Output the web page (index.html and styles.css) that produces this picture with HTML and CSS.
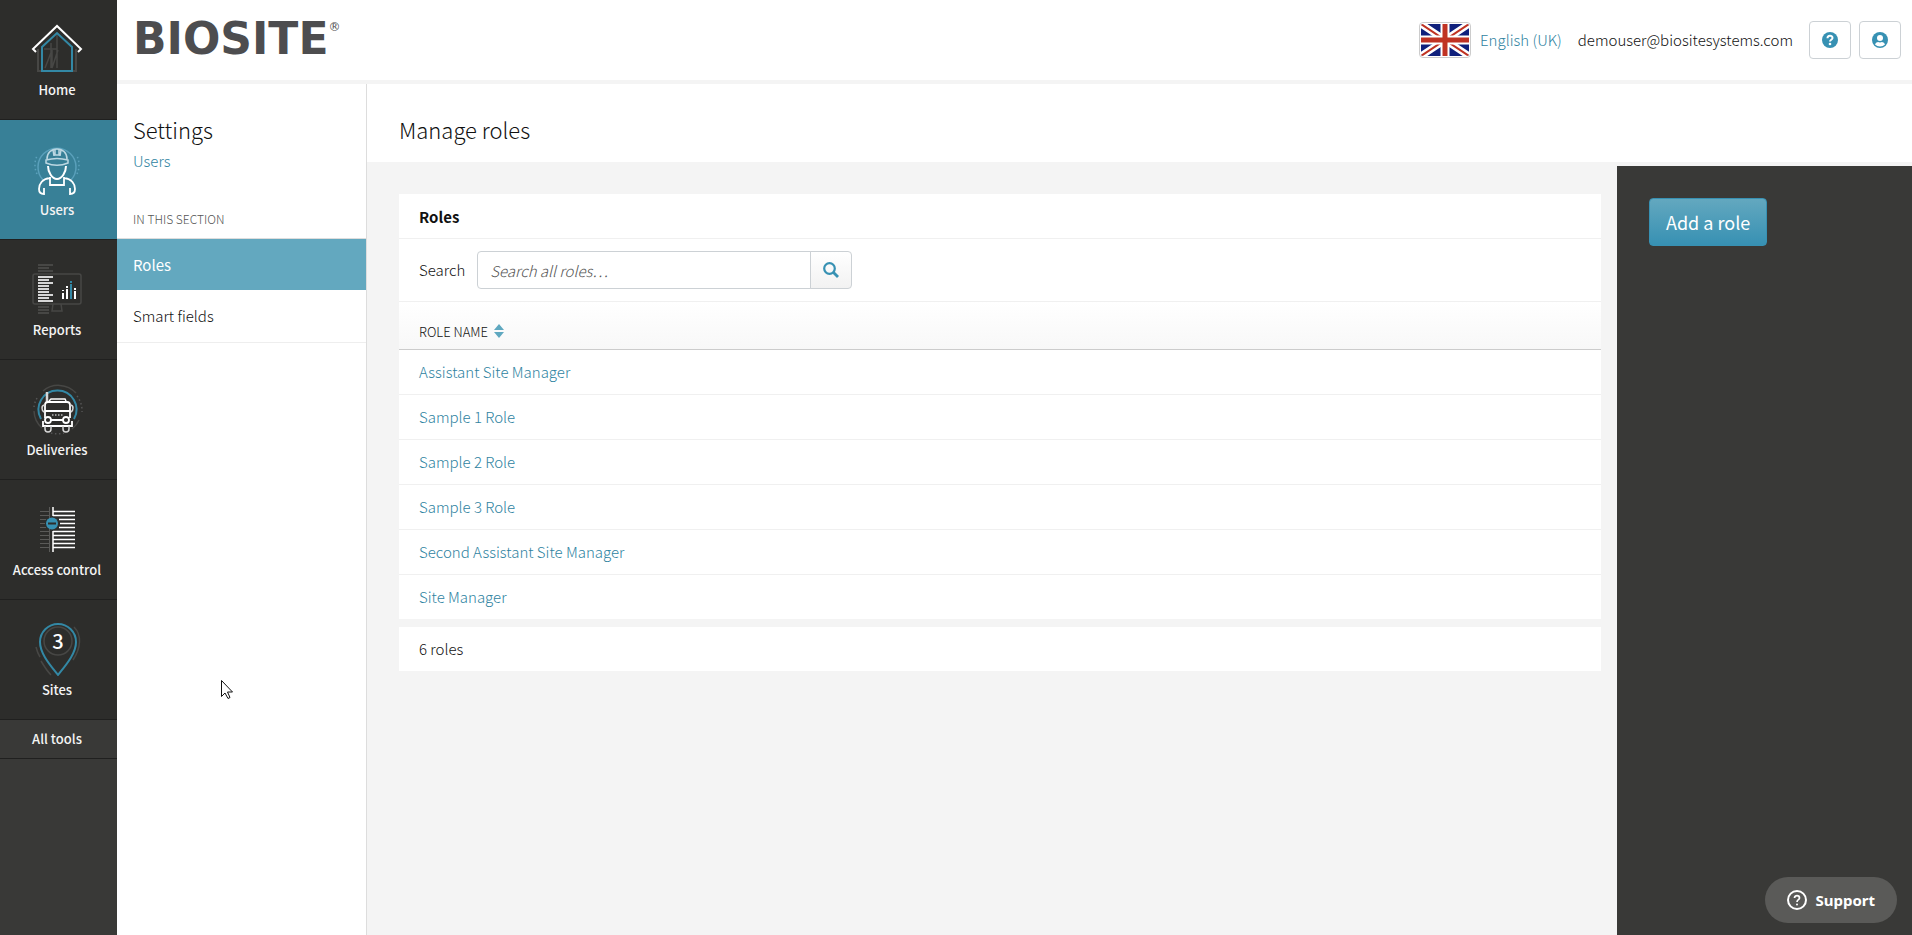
FILE: index.html
```
<!DOCTYPE html>
<html lang="en">
<head>
<meta charset="UTF-8" />
<meta name="viewport" content="width=device-width, initial-scale=1" />
<title>Manage roles - Biosite</title>
<link rel="stylesheet" href="styles.css">
</head>
<body>
<nav class="rail" aria-label="Main">
  <a class="rail-item" href="#">
    <svg class="rail-icon" viewBox="0 0 56 56" fill="none">
      <path d="M9 29v22h3M47 29v22h-3" stroke="#474745" stroke-width="2"/>
      <path d="M22 23v25M28 13v35M15 29h13M16 48l7-18v18l6-18" stroke="#474745" stroke-width="1.5"/>
      <path d="M13 51V27l15-14 15 14v24z" stroke="#3388a5" stroke-width="2"/>
      <path d="M7 32l-3-3L28 6l24 23-3 3" stroke="#fff" stroke-width="2"/>
    </svg>
    Home
  </a>
  <a class="rail-item active" href="#">
    <svg class="rail-icon" viewBox="0 0 56 56" fill="none">
      <path d="M14 40a19 19 0 1 1 28 0" stroke="#5aa0bb" stroke-width="1.5"/>
      <path d="M8 34a21 21 0 0 1 0-18M48 34a21 21 0 0 0 0-18" stroke="#5aa0bb" stroke-width="1.5" stroke-dasharray="1.5 2.5"/>
      <path d="M18 19c0-6 4-10 10-10s10 4 10 10M24 10l1 6M32 10l-1 6M26 9v6h4V9M17 20c7-2 15-2 22 0v3c-7 3-15 3-22 0z" stroke="#bcd7e2" stroke-width="1.5"/>
      <path d="M19 26c0 6 4 13 9 13s9-7 9-13" stroke="#fff" stroke-width="2"/>
      <path d="M21 37v8h14v-8M21 38c-8 1-11 6-11 11 0 3 2 5 5 5v-6M35 38c8 1 11 6 11 11 0 3-2 5-5 5v-6" stroke="#fff" stroke-width="1.8"/>
    </svg>
    Users
  </a>
  <a class="rail-item" href="#">
    <svg class="rail-icon" viewBox="0 0 56 56" fill="none">
      <path d="M9 5h15M9 8h11M9 11h15M9 47h11M9 50h11M9 53h11" stroke="#474745" stroke-width="2"/>
      <rect x="4" y="14" width="48" height="30" rx="2" stroke="#474745" stroke-width="1.5"/>
      <path d="M24 44l-1 7h10l-1-7" stroke="#474745" stroke-width="1.5"/>
      <path d="M9 17h15M9 20h11M9 23h15M9 26h11M9 29h11M9 32h11M9 35h15M9 38h11M9 41h15" stroke="#d6d6d6" stroke-width="2"/>
      <path d="M34 39v-6M38 39V29M46 39v-8M34 31v-1M38 28v-2M46 30v-2" stroke="#fff" stroke-width="2"/>
      <path d="M42 39V24M42 23v-2" stroke="#3388a5" stroke-width="2"/>
    </svg>
    Reports
  </a>
  <a class="rail-item" href="#">
    <svg class="rail-icon" viewBox="0 0 56 56" fill="none">
      <path d="M14 11a24 24 0 0 1 33 2M5 31a24 24 0 0 0 8 17M50 40a24 24 0 0 1-7 9" stroke="#474745" stroke-width="1.5"/>
      <path d="M5 27a24 24 0 0 1 3-9M48 16a24 24 0 0 1 5 16M22 53a24 24 0 0 0 13 0" stroke="#555" stroke-width="1.5" stroke-dasharray="1.5 2.5"/>
      <path d="M12 39a19 19 0 1 1 33 0" stroke="#3388a5" stroke-width="2"/>
      <path d="M18 12v10" stroke="#d6d6d6" stroke-width="2.5"/>
      <path d="M20 21l2-2h14l1 2" stroke="#fff" stroke-width="1.5"/>
      <path d="M16 38V25q0-3 3-3h19q3 0 3 3v13M16 31h25M22 40h12M14 41v5h29v-5" stroke="#fff" stroke-width="1.8"/>
      <path d="M16 25q-3 0-3 3t2 4M41 25q3 0 3 3t-2 4" stroke="#d6d6d6" stroke-width="1.5"/>
      <path d="M23 35h11" stroke="#fff" stroke-dasharray="1.5 1.5"/>
      <circle cx="19" cy="40" r="3" stroke="#fff" stroke-width="1.8"/>
      <circle cx="37" cy="40" r="3" stroke="#fff" stroke-width="1.8"/>
      <path d="M16 46v3q0 3 3 3t3-3v-3M34 46v3q0 3 3 3t3-3v-3" stroke="#d6d6d6" stroke-width="1.5"/>
    </svg>
    Deliveries
  </a>
  <a class="rail-item" href="#">
    <svg class="rail-icon" viewBox="0 0 56 56" fill="none">
      <path d="M20.500 7v45M11 11.500h9M11 15.500h9M11 19.500h6M11 23.500h5M11 27.500h6M11 31.500h9M11 35.500h9M11 39.500h9M11 43.500h9M11 47.500h9" stroke="#5a5a58"/>
      <path d="M24 7v9M24 31v21M24 11.500h22M24 15.500h22M30 19.500h16M31 23.500h15M30 27.500h16M24 31.500h22M24 35.500h22M24 39.500h22M24 43.500h22M24 47.500h22" stroke="#fff" stroke-width="1.500"/>
      <circle cx="23" cy="23.500" r="6" fill="#3791b3"/>
      <rect x="19" y="22.500" width="8" height="2" fill="#2d2d2b"/>
    </svg>
    Access control
  </a>
  <a class="rail-item" href="#">
    <svg class="rail-icon" viewBox="0 0 56 56" fill="none">
      <path d="M45 7c8 8 7 21-1 33M7 27c1 4 2 7 4 10M12 41c3 5 6 10 10 14" stroke="#474745" stroke-width="1.5"/>
      <circle cx="29" cy="21" r="14" stroke="#474745" stroke-width="1.5"/>
      <path d="M29 55C22 46 11 34 11 22a18 18 0 0 1 36 0c0 12-11 24-18 33z" stroke="#3388a5" stroke-width="2"/>
      <text class="pin-count" x="29" y="29">3</text>
    </svg>
    Sites
  </a>
  <a class="rail-all" href="#">All tools</a>
</nav>

<div class="page">
  <header class="topbar">
    <a class="logo" href="#">BIOSITE<sup class="logo-mark">®</sup></a>
    <div class="topbar-tools">
      <svg class="flag" viewBox="0 0 48 32" preserveAspectRatio="none">
        <rect width="48" height="32" fill="#10207c"/>
        <path d="M0 0l48 32M48 0L0 32" stroke="#fff" stroke-width="7"/>
        <path d="M0 0l48 32M48 0L0 32" stroke="#c03223" stroke-width="2"/>
        <path d="M24 0v32M0 16h48" stroke="#fff" stroke-width="9"/>
        <path d="M24 0v32M0 16h48" stroke="#c03223" stroke-width="5"/>
      </svg>
      <a class="language" href="#">English (UK)</a>
      <span class="account">demouser@biositesystems.com</span>
      <button class="icon-btn" type="button" aria-label="Help">
        <svg viewBox="0 0 16 16" fill="none">
          <circle cx="8" cy="8" r="8" fill="#3791b3"/>
          <path d="M5.500 6.200C5.500 3 10.500 3 10.500 6 10.500 7.800 8 7.700 8 9.500" stroke="#fff" stroke-width="2"/>
          <circle cx="8" cy="12" r="1.300" fill="#fff"/>
        </svg>
      </button>
      <button class="icon-btn" type="button" aria-label="Account">
        <svg viewBox="0 0 16 16">
          <circle cx="8" cy="8" r="8" fill="#3791b3"/>
          <circle cx="8" cy="6" r="3" fill="#fff"/>
          <path d="M3 12.500Q3.500 10 6 10q2 .8 4 0 2.500 0 3 2.500Q11 14.500 8 14.500T3 12.500z" fill="#fff"/>
        </svg>
      </button>
    </div>
  </header>

  <div class="workspace">
    <nav class="subnav" aria-label="Settings">
      <h2 class="title">Settings</h2>
      <a class="subnav-parent" href="#">Users</a>
      <p class="subnav-heading">IN THIS SECTION</p>
      <a class="subnav-item active" href="#">Roles</a>
      <a class="subnav-item" href="#">Smart fields</a>
    </nav>

    <main class="content">
      <div class="content-header">
        <h1 class="title">Manage roles</h1>
      </div>
      <div class="content-body">
        <section class="panels">
          <div class="panel">
            <h3 class="panel-title">Roles</h3>
            <form class="search">
              <label for="roleSearch">Search</label>
              <div class="search-group">
                <input type="text" id="roleSearch" placeholder="Search all roles…" />
                <button class="search-btn" type="button" aria-label="Search">
                  <svg viewBox="0 0 16 16" fill="none" stroke="#3791b3">
                    <circle cx="6.500" cy="6.500" r="5.300" stroke-width="2.200"/>
                    <path d="M10.500 10.500l4.500 4.500" stroke-width="2.800"/>
                  </svg>
                </button>
              </div>
            </form>
            <table class="roles">
              <thead>
                <tr>
                  <th>ROLE NAME
                    <svg class="sort" viewBox="0 0 10 14" fill="#5fa8c0"><path d="M0 6l5-6 5 6zM0 8h10l-5 6z"/></svg>
                  </th>
                </tr>
              </thead>
              <tbody>
                <tr><td><a href="#">Assistant Site Manager</a></td></tr>
                <tr><td><a href="#">Sample 1 Role</a></td></tr>
                <tr><td><a href="#">Sample 2 Role</a></td></tr>
                <tr><td><a href="#">Sample 3 Role</a></td></tr>
                <tr><td><a href="#">Second Assistant Site Manager</a></td></tr>
                <tr><td><a href="#">Site Manager</a></td></tr>
              </tbody>
            </table>
          </div>
          <div class="panel panel-footer">6 roles</div>
        </section>
        <aside class="actions">
          <button class="primary-btn" type="button">Add a role</button>
        </aside>
      </div>
    </main>
  </div>
</div>

<button class="support" type="button">
  <svg viewBox="0 0 20 20" fill="none" stroke="#fff">
    <circle cx="10" cy="10" r="9" stroke-width="2"/>
    <path d="M7.500 8C7.500 4.700 12.500 4.700 12.500 8 12.500 9.800 10 9.600 10 12" stroke-width="1.700"/>
    <circle cx="10" cy="14.500" r="1" fill="#fff" stroke="none"/>
  </svg>
  Support
</button>

<svg class="pointer" viewBox="0 0 12 19"><path d="M.5.500v16l3.500-3.500 3 5.500 2-1-2.500-5.500h5z" fill="#fff" stroke="#111"/></svg>
</body>
</html>
```

FILE: styles.css
```
* {
  box-sizing: border-box;
}
body {
  display: flex;
  min-height: 100vh;
  margin: 0;
  background: #f4f4f4;
  color: #111;
  font: 300 15px/24px "Noto Sans CJK SC", "Open Sans", sans-serif;
}
a {
  color: #2f83a1;
  text-decoration: none;
}
button, input {
  font: inherit;
}
button {
  cursor: pointer;
}

/* left rail */
.rail {
  flex: 0 0 117px;
  background: #393937;
}
.rail-item, .rail-all {
  display: flex;
  flex-direction: column;
  align-items: center;
  padding-right: 3px;
  background: #2d2d2b;
  border-bottom: 1px solid #20201f;
  color: #f4f4f4;
  font-size: 13px;
  font-weight: 500;
  line-height: 20px;
}
.rail-item {
  height: 120px;
  padding-top: 20px;
  gap: 4px;
}
.rail-item.active {
  background: #388097;
}
.rail-icon {
  width: 56px;
  height: 56px;
}
.pin-count {
  fill: #fff;
  font-size: 20px;
  font-weight: 500;
  text-anchor: middle;
}
.rail-all {
  padding-top: 9px;
  padding-bottom: 9px;
  background: #393937;
}

/* top bar */
.page {
  display: flex;
  flex: 1;
  flex-direction: column;
  min-width: 0;
}
.topbar {
  display: flex;
  justify-content: space-between;
  height: 84px;
  padding: 0 11px 0 16px;
  background: #fff;
  border-bottom: 4px solid #f4f4f4;
}
.logo {
  display: flex;
  padding-top: 14px;
  color: #4d4d4f;
  font: bold 44px/50px "DejaVu Sans", sans-serif;
}
.logo-mark {
  font: 12px/26px "DejaVu Sans", sans-serif;
}
.topbar-tools {
  display: flex;
  align-items: center;
}
.flag {
  width: 52px;
  height: 36px;
  padding: 1px;
  border: 1px solid #ccc;
  border-radius: 4px;
}
.language {
  margin: 0 16px 0 9px;
}
.account {
  margin-right: 16px;
}
.icon-btn {
  width: 42px;
  height: 38px;
  padding: 0;
  background: #fff;
  border: 1px solid #ccd1d5;
  border-radius: 4px;
}
.icon-btn + .icon-btn {
  margin-left: 8px;
}
.icon-btn svg, .search-btn svg {
  display: block;
  width: 16px;
  height: 16px;
  margin: auto;
}

/* settings menu */
.workspace {
  display: flex;
  flex: 1;
}
.subnav {
  flex: 0 0 250px;
  padding-top: 29px;
  background: #fff;
  border-right: 1px solid #ddd;
}
.title {
  margin: 0;
  font-size: 22px;
  font-weight: 300;
  line-height: 32px;
}
.subnav .title, .subnav-parent, .subnav-heading {
  display: block;
  padding-left: 16px;
}
.subnav-parent {
  padding-top: 4px;
}
.subnav-heading {
  margin: 0;
  padding-top: 36px;
  padding-bottom: 9px;
  border-bottom: 1px solid #ddd;
  color: #555;
  font-size: 12px;
  line-height: 20px;
}
.subnav-item {
  display: block;
  padding: 14px 16px;
  border-bottom: 1px solid #eee;
  color: #111;
}
.subnav-item.active {
  padding-bottom: 13px;
  background: #63a8bf;
  border-bottom: 0;
  color: #fff;
  font-weight: 400;
}

/* main content */
.content {
  display: flex;
  flex: 1;
  flex-direction: column;
  min-width: 0;
}
.content-header {
  padding: 29px 32px 17px;
  background: #fff;
}
.content-body {
  display: flex;
  flex: 1;
  gap: 16px;
}
.panels {
  flex: 1;
  padding: 32px 0 32px 32px;
}
.panel {
  background: #fff;
}
.panel-title {
  margin: 0;
  padding: 11px 20px 9px;
  border-bottom: 1px solid #f0f0f0;
  font-size: 15px;
  font-weight: bold;
}
.search {
  display: flex;
  align-items: center;
  gap: 12px;
  padding: 12px 20px;
  border-bottom: 1px solid #f0f0f0;
}
.search-group {
  display: flex;
}
.search-group input {
  width: 334px;
  height: 38px;
  padding: 0 12px;
  border: 1px solid #ccd1d5;
  border-radius: 4px 0 0 4px;
}
.search-group input::placeholder {
  color: #555;
  font-style: italic;
}
.search-btn {
  width: 42px;
  margin-left: -1px;
  padding: 0;
  background: linear-gradient(#fff, #f2f2f2);
  border: 1px solid #ccd1d5;
  border-radius: 0 4px 4px 0;
}
.roles {
  width: 100%;
  border-collapse: collapse;
}
.roles th {
  height: 47px;
  padding: 13px 20px 0;
  background: linear-gradient(#fff, #f8f8f8);
  border-bottom: 1px solid #ccc;
  font-size: 13px;
  font-weight: 300;
  text-align: left;
}
.sort {
  width: 10px;
  height: 14px;
  margin-left: 3px;
  vertical-align: -1px;
}
.roles td {
  height: 45px;
  padding: 0 20px;
  border-bottom: 1px solid #f0f0f0;
}
.roles tr:last-child td {
  border-bottom: 0;
}
.panel-footer {
  margin-top: 8px;
  padding: 10px 20px;
}
.actions {
  flex: 0 0 295px;
  margin-top: 4px;
  padding: 32px;
  background: #393937;
}
.primary-btn {
  height: 48px;
  padding: 0 16px;
  background: linear-gradient(#63a8bf, #3791b3);
  border: 1px solid #3791b3;
  border-radius: 4px;
  color: #fff;
  font-size: 18px;
  font-weight: 400;
}

/* overlays */
.support {
  position: fixed;
  right: 15px;
  bottom: 12px;
  display: flex;
  align-items: center;
  gap: 8px;
  height: 46px;
  padding: 0 22px;
  background: #5a5a58;
  border: 0;
  border-radius: 23px;
  color: #fff;
  font: bold 15px/24px "Noto Sans", sans-serif;
}
.support svg {
  width: 20px;
  height: 20px;
}
.pointer {
  position: absolute;
  left: 221px;
  top: 680px;
  width: 12px;
  height: 19px;
}
```
